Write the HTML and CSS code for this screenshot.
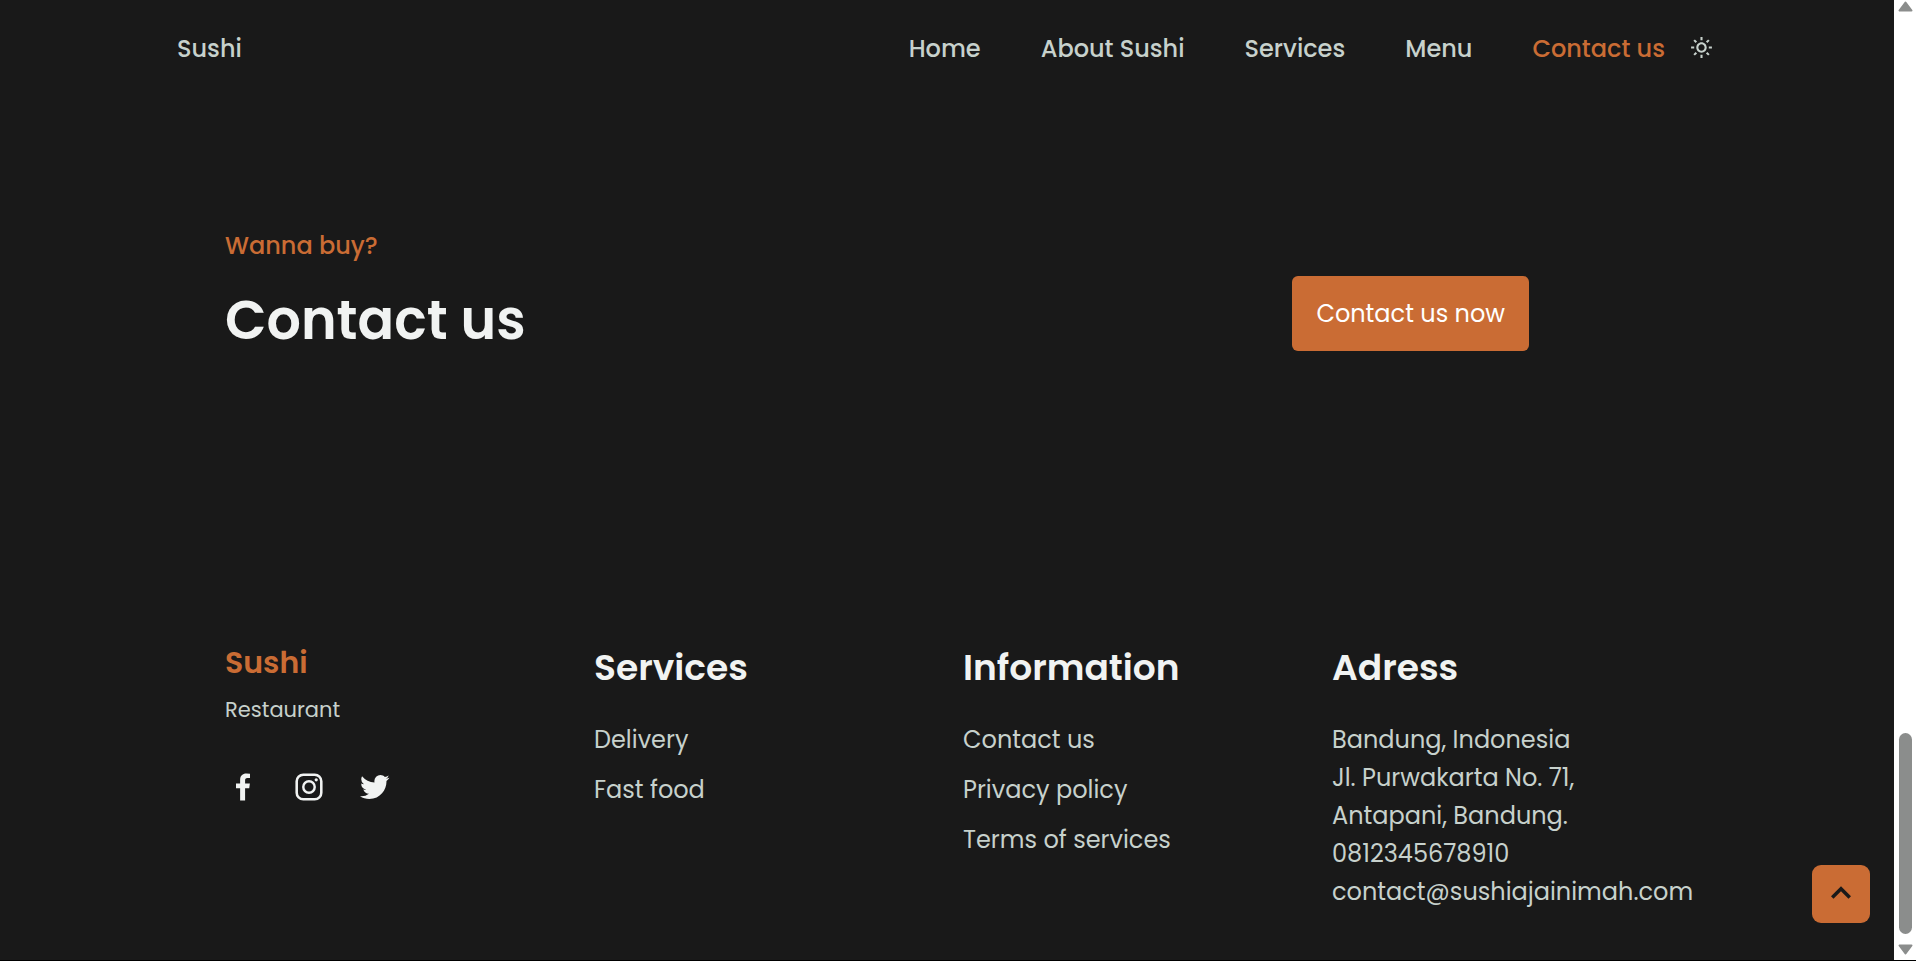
FILE: index.html
```html
<!DOCTYPE html>
<html lang="en">
<head>
    <meta charset="UTF-8">
    <meta name="viewport" content="width=device-width, initial-scale=1.0">
    <title>Sushi</title>
    <link rel="stylesheet" href="styles.css">
</head>
<body>
    <div class="page">
        <header class="header container">
            <a href="#" class="nav-logo">Sushi</a>
            <nav class="nav-menu">
                <a href="#home">Home</a>
                <a href="#about">About Sushi</a>
                <a href="#services">Services</a>
                <a href="#menu">Menu</a>
                <a href="#contact" class="active-link">Contact us</a>
            </nav>
            <button type="button" class="theme-button" aria-label="Change theme">
                <svg viewBox="0 0 24 24"><path d="M6.995 12c0 2.761 2.246 5.007 5.007 5.007s5.007-2.246 5.007-5.007-2.246-5.007-5.007-5.007S6.995 9.239 6.995 12zM12 8.993c1.658 0 3.007 1.349 3.007 3.007S13.658 15.007 12 15.007 8.993 13.658 8.993 12 10.342 8.993 12 8.993zM10.998 19h2v3h-2zm0-17h2v3h-2zm-9 9h3v2h-3zm17 0h3v2h-3zM4.219 18.363l2.12-2.122 1.415 1.414-2.12 2.122zM16.24 6.344l2.122-2.122 1.414 1.414-2.122 2.122zM6.342 7.759 4.22 5.637l1.415-1.414 2.12 2.122zm13.434 10.605-1.414 1.414-2.122-2.122 1.414-1.414z"/></svg>
            </button>
        </header>

        <main>
            <section class="contact container" id="contact">
                <div>
                    <span class="section-subtitle">Wanna buy?</span>
                    <h2 class="section-title">Contact us</h2>
                </div>
                <button type="button" class="button">Contact us now</button>
            </section>
        </main>

        <footer class="footer container">
            <div class="footer-content">
                <a href="#" class="footer-logo">Sushi</a>
                <span class="footer-description">Restaurant</span>
                <div class="footer-socials">
                    <a href="#" aria-label="Facebook"><svg viewBox="0 0 24 24"><path d="M13.397 20.997v-8.196h2.765l.411-3.209h-3.176V7.548c0-.926.258-1.56 1.587-1.56h1.684V3.127A22.336 22.336 0 0 0 14.201 3c-2.444 0-4.122 1.492-4.122 4.231v2.355H7.332v3.209h2.753v8.202h3.312z"/></svg></a>
                    <a href="#" aria-label="Instagram"><svg viewBox="0 0 24 24"><rect x="3.8" y="3.8" width="16.4" height="16.4" rx="4.4" fill="none" stroke="currentColor" stroke-width="1.7"/><path d="M11.999 7.377a4.623 4.623 0 1 0 0 9.248 4.623 4.623 0 0 0 0-9.248zm0 7.627a3.004 3.004 0 1 1 0-6.008 3.004 3.004 0 0 1 0 6.008z"/><circle cx="16.806" cy="7.207" r="1.078"/></svg></a>
                    <a href="#" aria-label="Twitter"><svg viewBox="0 0 24 24"><path d="M19.633 7.997c.013.175.013.349.013.523 0 5.325-4.053 11.461-11.46 11.461-2.282 0-4.402-.661-6.186-1.809.324.037.636.05.973.05a8.07 8.07 0 0 0 5.001-1.721 4.036 4.036 0 0 1-3.767-2.793c.249.037.499.062.761.062.361 0 .724-.05 1.061-.137a4.027 4.027 0 0 1-3.23-3.953v-.05c.537.299 1.16.486 1.82.511a4.022 4.022 0 0 1-1.796-3.354c0-.748.199-1.434.548-2.032a11.457 11.457 0 0 0 8.306 4.215c-.062-.3-.1-.611-.1-.923a4.026 4.026 0 0 1 4.028-4.028c1.16 0 2.207.486 2.943 1.272a7.957 7.957 0 0 0 2.556-.973 4.02 4.02 0 0 1-1.771 2.22 8.073 8.073 0 0 0 2.319-.624 8.645 8.645 0 0 1-2.019 2.083z"/></svg></a>
                </div>
            </div>

            <div class="footer-content">
                <h3 class="footer-title">Services</h3>
                <ul class="footer-links">
                    <li><a href="#">Delivery</a></li>
                    <li><a href="#">Fast food</a></li>
                </ul>
            </div>

            <div class="footer-content">
                <h3 class="footer-title">Information</h3>
                <ul class="footer-links">
                    <li><a href="#">Contact us</a></li>
                    <li><a href="#">Privacy policy</a></li>
                    <li><a href="#">Terms of services</a></li>
                </ul>
            </div>

            <div class="footer-content">
                <h3 class="footer-title">Adress</h3>
                <ul class="footer-address">
                    <li>Bandung, Indonesia</li>
                    <li>Jl. Purwakarta No. 71,</li>
                    <li>Antapani, Bandung.</li>
                    <li>0812345678910</li>
                    <li>contact@sushiajainimah.com</li>
                </ul>
            </div>
        </footer>

        <a href="#" class="scrolltop" aria-label="Back to top">
            <svg viewBox="0 0 24 24"><path d="m6.293 13.293 1.414 1.414L12 10.414l4.293 4.293 1.414-1.414L12 7.586z"/></svg>
        </a>
    </div>

    <div class="scrollbar" aria-hidden="true">
        <svg class="scroll-arrow" viewBox="0 0 15 11"><path d="M7.5 1.5 1.5 9.5h12z"/></svg>
        <div class="scroll-thumb"></div>
        <svg class="scroll-arrow" viewBox="0 0 15 11"><path d="M7.5 9.5 1.5 1.5h12z"/></svg>
    </div>
</body>
</html>
```
FILE: styles.css
```css
:root {
    --first-color: #ca6c34;
    --title-color: #f1f3f2;
    --text-color: #c7d1cc;
    --body-color: #191919;
}

* {
    box-sizing: border-box;
}

body {
    display: flex;
    min-height: 100vh;
    margin: 0;
    border-bottom: 1px solid #000;
    background-color: var(--body-color);
    color: var(--text-color);
    font-family: Poppins, Inter, sans-serif;
    font-size: 24px;
    line-height: 38px;
}

h2, h3, ul {
    margin: 0;
    padding: 0;
}

ul {
    list-style: none;
}

a {
    color: inherit;
    text-decoration: none;
}

button {
    border: none;
    font: inherit;
    cursor: pointer;
}

svg {
    display: block;
    fill: currentColor;
}

.page {
    position: relative;
    flex: 1;
}

.container {
    max-width: 1540px;
    margin: 0 auto;
}

/* Header */
.header {
    display: flex;
    align-items: center;
    height: 98px;
    padding-right: 3px;
    font-weight: 500;
}

.nav-menu {
    display: flex;
    gap: 60px;
    margin-left: auto;
}

.active-link {
    color: var(--first-color);
}

.theme-button {
    margin-left: 24px;
    padding: 0 0 4px;
    background: none;
    color: var(--text-color);
}

.theme-button svg {
    width: 25px;
    height: 25px;
}

/* Contact */
.contact {
    display: flex;
    align-items: flex-end;
    justify-content: space-between;
    padding: 129px 188px 0 48px;
}

.section-subtitle {
    display: block;
    margin-bottom: 15px;
    color: var(--first-color);
    font-weight: 500;
}

.section-title {
    color: var(--title-color);
    font-size: 54px;
    font-weight: 600;
    line-height: 80px;
}

.button {
    margin-bottom: 9px;
    padding: 18px 24px;
    border-radius: 6px;
    background-color: var(--first-color);
    color: #fff;
    line-height: 39px;
}

/* Footer */
.footer {
    display: grid;
    grid-template-columns: repeat(4, minmax(0, 1fr));
    padding: 281px 16px 46px 48px;
}

.footer-logo {
    display: block;
    color: var(--first-color);
    font-size: 30px;
    font-weight: 600;
    line-height: 44px;
}

.footer-description {
    display: block;
    margin: 9px 0 43px;
    font-size: 21px;
    line-height: 32px;
}

.footer-socials {
    display: flex;
    gap: 30px;
    color: var(--title-color);
}

.footer-socials svg {
    width: 36px;
    height: 36px;
}

.footer-title {
    margin-bottom: 26px;
    color: var(--title-color);
    font-size: 36px;
    font-weight: 600;
    line-height: 54px;
}

.footer-links li {
    margin-bottom: 12px;
}

/* Scroll up */
.scrolltop {
    position: absolute;
    right: 24px;
    bottom: 37px;
    padding: 8px;
    border-radius: 9px;
    background-color: var(--first-color);
    color: var(--body-color);
}

.scrolltop svg {
    width: 42px;
    height: 42px;
}

/* Scrollbar */
.scrollbar {
    display: flex;
    flex-direction: column;
    align-items: center;
    width: 22px;
    padding: 1px 0 5px;
    background-color: #fff;
    color: #8b8d8c;
}

.scroll-arrow {
    width: 15px;
    height: 11px;
    stroke: currentColor;
    stroke-width: 2;
    stroke-linejoin: round;
}

.scroll-thumb {
    width: 13px;
    height: 201px;
    margin: auto 0 10px;
    border-radius: 7px;
    background-color: #8b8d8c;
}
```
